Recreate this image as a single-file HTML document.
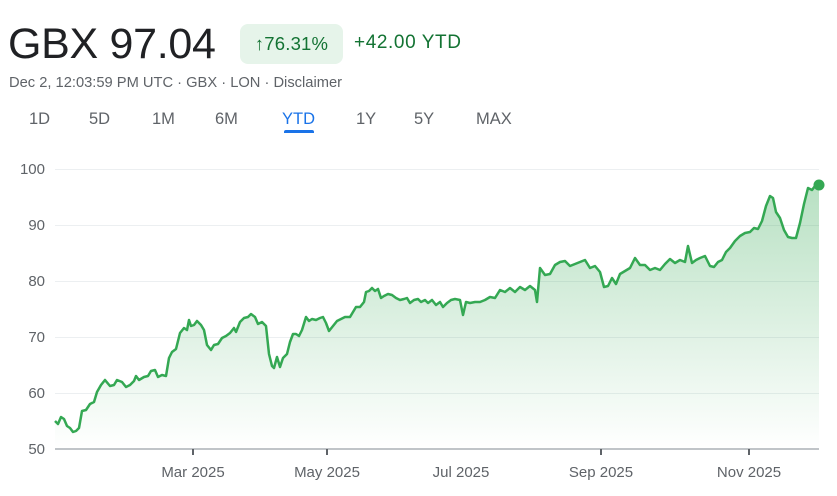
<!DOCTYPE html>
<html><head><meta charset="utf-8"><style>
body{margin:0;width:837px;height:496px;background:#fff;font-family:"Liberation Sans",Arial,sans-serif;overflow:hidden;position:relative}
.price{position:absolute;left:8px;top:20px;font-size:43px;color:#202124;letter-spacing:-0.3px}
.badge{position:absolute;left:240px;top:24px;width:103px;height:40px;background:#e6f4ea;border-radius:8px;color:#137333;font-size:18.5px;line-height:40px;text-align:center;letter-spacing:0.2px}
.chg{position:absolute;left:354px;top:32px;font-size:19px;color:#137333;letter-spacing:0.6px}
.meta{position:absolute;left:9px;top:75px;font-size:14.7px;color:#5f6368}
.tab{position:absolute;top:110px;font-size:16.5px;color:#5f6368}
.tab.sel{color:#1a73e8}
.ul{position:absolute;left:284px;top:130px;width:30px;height:3px;background:#1a73e8;border-radius:2px 2px 0 0}
svg{position:absolute;left:0;top:0}
</style></head><body>
<div class="price">GBX 97.04</div>
<div class="badge">↑76.31%</div>
<div class="chg">+42.00 YTD</div>
<div class="meta">Dec 2, 12:03:59 PM UTC · GBX · LON · Disclaimer</div>
<div class="tab" style="left:29px">1D</div>
<div class="tab" style="left:89px">5D</div>
<div class="tab" style="left:152px">1M</div>
<div class="tab" style="left:215px">6M</div>
<div class="tab sel" style="left:282px">YTD</div>
<div class="tab" style="left:356px">1Y</div>
<div class="tab" style="left:414px">5Y</div>
<div class="tab" style="left:476px">MAX</div>
<div class="ul"></div>
<svg width="837" height="496">
<defs><linearGradient id="g" x1="0" y1="0" x2="0" y2="1"><stop offset="0" stop-color="#34a853" stop-opacity="0.35"/><stop offset="1" stop-color="#34a853" stop-opacity="0"/></linearGradient></defs>
<g stroke="#eceff1" stroke-width="1">
<line x1="55" x2="819" y1="169.5" y2="169.5"/><line x1="55" x2="819" y1="225.5" y2="225.5"/><line x1="55" x2="819" y1="281.5" y2="281.5"/><line x1="55" x2="819" y1="337.5" y2="337.5"/><line x1="55" x2="819" y1="393.5" y2="393.5"/>
</g>
<line x1="55" x2="819" y1="449" y2="449" stroke="#9aa0a6" stroke-width="1.3"/>
<g stroke="#5f6368" stroke-width="2"><line x1="193" x2="193" y1="449" y2="455"/><line x1="327" x2="327" y1="449" y2="455"/><line x1="601" x2="601" y1="449" y2="455"/><line x1="749" x2="749" y1="449" y2="455"/></g>
<g font-size="15" fill="#5f6368" font-family="Liberation Sans,Arial,sans-serif" text-anchor="end">
<text x="45" y="174">100</text><text x="45" y="230">90</text><text x="45" y="286">80</text><text x="45" y="342">70</text><text x="45" y="398">60</text><text x="45" y="454">50</text>
</g>
<g font-size="15" fill="#5f6368" font-family="Liberation Sans,Arial,sans-serif" text-anchor="middle">
<text x="193" y="477">Mar 2025</text><text x="327" y="477">May 2025</text><text x="461" y="477">Jul 2025</text><text x="601" y="477">Sep 2025</text><text x="749" y="477">Nov 2025</text>
</g>
<path d="M55,421 L58,424 61,417 64,419 67,426 70,428 73,432 76,431 79,428 82,411 86,410 90,404 94,402 97,392 101,385 105,380 110,386 114,385 117,380 122,382 126,387 130,385 134,381 136,376 139,380 144,377 148,376 151,371 155,370 158,377 162,375 166,376 169,358 172,352 176,349 180,333 184,328 187,330 189,320 191,326 194,325 197,321 201,325 204,330 207,345 211,350 214,345 218,344 222,338 226,336 230,333 234,328 236,332 240,322 244,318 248,317 251,314 255,317 258,324 262,322 266,326 269,354 272,366 274,368 277,357 280,367 283,358 287,354 290,342 293,334 296,334 299,336 302,330 306,317 309,321 312,319 316,320 320,318 323,317 326,323 329,331 333,326 337,321 341,319 345,317 350,317 353,312 356,307 360,307 364,302 366,292 369,291 372,288 375,291 378,289 381,298 384,296 388,294 392,295 396,298 400,300 404,299 407,298 410,303 414,300 418,299 421,302 425,300 428,303 432,300 436,305 440,302 443,307 447,303 451,300 455,299 460,300 463,315 466,302 470,303 475,302 480,302 485,300 490,297 495,298 500,290 505,292 510,288 515,292 520,287 525,290 530,286 535,290 537,302 540,268 545,275 550,274 555,265 560,262 565,261 570,266 575,264 580,262 585,260 590,268 595,266 600,272 604,287 608,286 612,278 616,284 620,274 625,271 630,268 635,258 640,265 645,265 650,270 655,268 660,270 665,264 670,259 675,263 680,260 685,262 688,246 692,263 696,260 700,258 705,256 710,266 714,267 718,262 722,260 726,252 730,248 735,241 740,236 745,233 750,232 754,228 758,229 762,221 766,206 770,196 773,198 776,212 780,218 784,230 788,237 792,238 796,238 800,223 804,204 808,188 812,190 815,186 819,185 L819,449 L55,449Z" fill="url(#g)"/>
<path d="M55,421 L58,424 61,417 64,419 67,426 70,428 73,432 76,431 79,428 82,411 86,410 90,404 94,402 97,392 101,385 105,380 110,386 114,385 117,380 122,382 126,387 130,385 134,381 136,376 139,380 144,377 148,376 151,371 155,370 158,377 162,375 166,376 169,358 172,352 176,349 180,333 184,328 187,330 189,320 191,326 194,325 197,321 201,325 204,330 207,345 211,350 214,345 218,344 222,338 226,336 230,333 234,328 236,332 240,322 244,318 248,317 251,314 255,317 258,324 262,322 266,326 269,354 272,366 274,368 277,357 280,367 283,358 287,354 290,342 293,334 296,334 299,336 302,330 306,317 309,321 312,319 316,320 320,318 323,317 326,323 329,331 333,326 337,321 341,319 345,317 350,317 353,312 356,307 360,307 364,302 366,292 369,291 372,288 375,291 378,289 381,298 384,296 388,294 392,295 396,298 400,300 404,299 407,298 410,303 414,300 418,299 421,302 425,300 428,303 432,300 436,305 440,302 443,307 447,303 451,300 455,299 460,300 463,315 466,302 470,303 475,302 480,302 485,300 490,297 495,298 500,290 505,292 510,288 515,292 520,287 525,290 530,286 535,290 537,302 540,268 545,275 550,274 555,265 560,262 565,261 570,266 575,264 580,262 585,260 590,268 595,266 600,272 604,287 608,286 612,278 616,284 620,274 625,271 630,268 635,258 640,265 645,265 650,270 655,268 660,270 665,264 670,259 675,263 680,260 685,262 688,246 692,263 696,260 700,258 705,256 710,266 714,267 718,262 722,260 726,252 730,248 735,241 740,236 745,233 750,232 754,228 758,229 762,221 766,206 770,196 773,198 776,212 780,218 784,230 788,237 792,238 796,238 800,223 804,204 808,188 812,190 815,186 819,185" fill="none" stroke="#34a853" stroke-width="2.5" stroke-linejoin="round"/>
<circle cx="819" cy="185" r="5.5" fill="#34a853"/>
</svg>
</body></html>
